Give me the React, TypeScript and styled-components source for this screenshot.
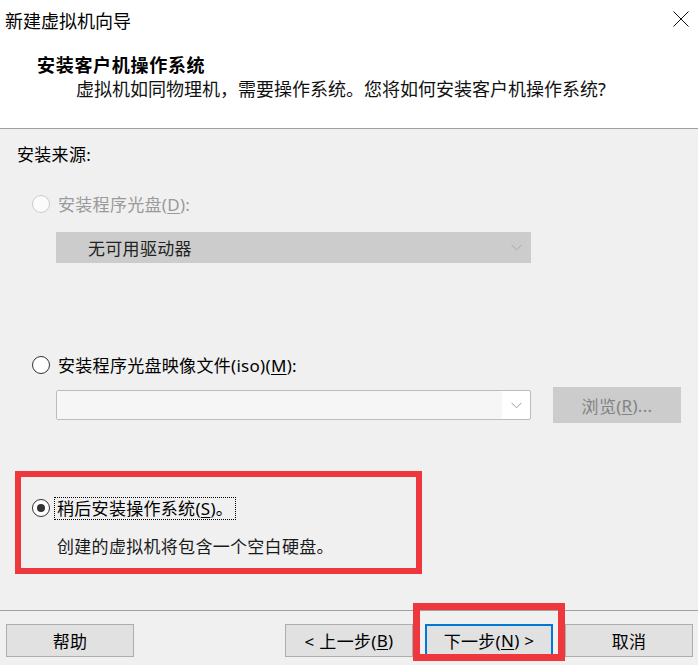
import React from 'react'
import styled, { createGlobalStyle } from 'styled-components'

const GlobalStyle = createGlobalStyle`
  html, body {
    margin: 0;
    padding: 0;
    background: #f0f0f0;
  }
  body {
    font-family: "Noto Sans", "Noto Sans CJK SC", sans-serif;
    color: #000;
  }
`

const Window = styled.div`
  width: 698px;
  height: 665px;
  display: flex;
  flex-direction: column;
  background: #f0f0f0;
  overflow: hidden;
`

const TitleBar = styled.div`
  height: 40px;
  flex: none;
  display: flex;
  align-items: center;
  justify-content: space-between;
  padding: 0 9px 0 5px;
  background: #fff;
  font-size: 18px;
`

const CloseButton = styled.div`
  width: 16px;
  height: 16px;
  display: flex;
  margin-top: -3px;
`

const Header = styled.div`
  flex: none;
  background: #fff;
  padding: 13px 0 27px 37px;
  border-bottom: 1px solid #a0a0a0;
`

const HeaderTitle = styled.div`
  font-size: 18px;
  line-height: 24px;
  font-weight: 700;
  letter-spacing: 0.7px;
`

const HeaderSub = styled.div`
  font-size: 18px;
  line-height: 24px;
  padding-left: 39px;
  color: #111;
`

const Body = styled.div`
  flex: 1;
  display: flex;
  flex-direction: column;
  padding: 0 17px;
`

const SectionLabel = styled.div`
  margin-top: 14px;
  font-size: 17px;
  line-height: 24px;
  letter-spacing: 0.3px;
`

const OptionRow = styled.div<{ $top: number; $inset?: number }>`
  display: flex;
  align-items: center;
  gap: 7px;
  height: 24px;
  margin-top: ${p => p.$top}px;
  padding-left: ${p => p.$inset ?? 15}px;
`

const Radio = styled.span<{ $checked?: boolean; $disabled?: boolean }>`
  width: 18px;
  height: 18px;
  box-sizing: border-box;
  border-radius: 50%;
  flex: none;
  border: 1px solid ${p => (p.$disabled ? '#cccccc' : '#333333')};
  background: ${p => (p.$disabled ? '#fbfbfb' : '#fff')};
  display: flex;
  align-items: center;
  justify-content: center;
  &::after {
    content: '';
    display: ${p => (p.$checked ? 'block' : 'none')};
    width: 8px;
    height: 8px;
    border-radius: 50%;
    background: #333;
  }
`

const OptionText = styled.span<{ $disabled?: boolean; $focused?: boolean }>`
  font-size: 17px;
  line-height: 21px;
  letter-spacing: 0.3px;
  color: ${p => (p.$disabled ? '#9a9a9a' : '#000')};
  margin-left: ${p => (p.$focused ? '-3px' : '0')};
  padding: 0 ${p => (p.$focused ? '2px' : '0')};
  border: 1px dotted ${p => (p.$focused ? '#000' : 'transparent')};
  u {
    text-decoration-thickness: 1px;
    text-underline-offset: 2px;
  }
`

const Combo = styled.div<{ $disabled?: boolean }>`
  display: flex;
  align-items: stretch;
  width: 475px;
  height: ${p => (p.$disabled ? 31 : 30)}px;
  box-sizing: border-box;
  border: 1px solid ${p => (p.$disabled ? '#cccccc' : '#bcbcbc')};
  background: ${p => (p.$disabled ? '#cccccc' : '#fff')};
  border-radius: ${p => (p.$disabled ? 0 : 2)}px;
`

const ComboField = styled.div<{ $disabled?: boolean }>`
  flex: 1;
  display: flex;
  align-items: center;
  padding-left: 31px;
  font-size: 17px;
  letter-spacing: 0.3px;
  color: #222;
  background: ${p => (p.$disabled ? 'transparent' : '#f6f6f6')};
`

const ComboArrow = styled.div`
  width: 28px;
  display: flex;
  align-items: center;
  justify-content: center;
`

const FirstCombo = styled.div`
  margin-top: 16px;
  padding-left: 39px;
`

const FileRow = styled.div`
  display: flex;
  align-items: center;
  gap: 22px;
  height: 36px;
  margin-top: 10px;
  padding-left: 39px;
`

const PushButton = styled.button<{ $disabled?: boolean; $default?: boolean; $w?: number; $h?: number }>`
  width: ${p => p.$w ?? 128}px;
  height: ${p => p.$h ?? 33}px;
  box-sizing: border-box;
  margin: 0;
  padding: 0;
  font-family: "Noto Sans", "Noto Sans CJK SC", sans-serif;
  font-size: 17px;
  letter-spacing: 0.3px;
  color: ${p => (p.$disabled ? '#838383' : '#000')};
  background: ${p => (p.$disabled ? '#cccccc' : '#e1e1e1')};
  border: ${p =>
    p.$default ? '2px solid #0078d7' : p.$disabled ? '1px solid #cccccc' : '1px solid #adadad'};
  display: flex;
  align-items: center;
  justify-content: center;
  u {
    text-decoration-thickness: 1px;
    text-underline-offset: 2px;
  }
`

const Highlight = styled.div`
  margin: 48px 0 0 -2px;
  width: 407px;
  height: 103px;
  box-sizing: border-box;
  border: 6px solid #ee383e;
  padding: 19px 0 0 11px;
`

const Description = styled.div`
  margin-top: 15px;
  padding-left: 25px;
  font-size: 17px;
  line-height: 24px;
  letter-spacing: 0.3px;
  color: #1a1a1a;
`

const Footer = styled.div`
  flex: none;
  height: 55px;
  box-sizing: border-box;
  border-top: 1px solid #a0a0a0;
  padding: 13px 5px 0 6px;
  display: flex;
  align-items: flex-start;
`

const NavGroup = styled.div`
  margin-left: auto;
  display: flex;
  gap: 12px;
`

const Marked = styled.span`
  position: relative;
  display: flex;
`

const MarkFrame = styled.span`
  position: absolute;
  left: -12px;
  right: -12px;
  top: -21px;
  bottom: -4px;
  border: 7px solid #ee383e;
  pointer-events: none;
`

const Chevron = ({ color }: { color: string }) => (
  <svg width="11" height="7" viewBox="0 0 11 7">
    <path d="M0.5 0.8 L5.5 5.8 L10.5 0.8" fill="none" stroke={color} strokeWidth="1" />
  </svg>
)

export default function App() {
  return (
    <>
      <GlobalStyle />
      <Window>
        <TitleBar>
          <span>新建虚拟机向导</span>
          <CloseButton>
            <svg width="16" height="16" viewBox="0 0 16 16">
              <path d="M0.5 0.5 L15.5 15.5 M15.5 0.5 L0.5 15.5" stroke="#111" strokeWidth="1" />
            </svg>
          </CloseButton>
        </TitleBar>

        <Header>
          <HeaderTitle>安装客户机操作系统</HeaderTitle>
          <HeaderSub>虚拟机如同物理机，需要操作系统。您将如何安装客户机操作系统?</HeaderSub>
        </Header>

        <Body>
          <SectionLabel>安装来源:</SectionLabel>

          <OptionRow $top={25}>
            <Radio $disabled />
            <OptionText $disabled>
              安装程序光盘(<u>D</u>):
            </OptionText>
          </OptionRow>
          <FirstCombo>
            <Combo $disabled>
              <ComboField $disabled>无可用驱动器</ComboField>
              <ComboArrow>
                <Chevron color="#a8a8a8" />
              </ComboArrow>
            </Combo>
          </FirstCombo>

          <OptionRow $top={90}>
            <Radio />
            <OptionText>
              安装程序光盘映像文件(iso)(<u>M</u>):
            </OptionText>
          </OptionRow>
          <FileRow>
            <Combo>
              <ComboField />
              <ComboArrow>
                <Chevron color="#9a9a9a" />
              </ComboArrow>
            </Combo>
            <PushButton $disabled $h={36}>
              浏览(<u>R</u>)...
            </PushButton>
          </FileRow>

          <Highlight>
            <OptionRow $top={0} $inset={0}>
              <Radio $checked />
              <OptionText $focused>
                稍后安装操作系统(<u>S</u>)。
              </OptionText>
            </OptionRow>
            <Description>创建的虚拟机将包含一个空白硬盘。</Description>
          </Highlight>
        </Body>

        <Footer>
          <PushButton>帮助</PushButton>
          <NavGroup>
            <PushButton>
              &lt; 上一步(<u>B</u>)
            </PushButton>
            <Marked>
              <PushButton $default>
                下一步(<u>N</u>) &gt;
              </PushButton>
              <MarkFrame />
            </Marked>
            <PushButton>取消</PushButton>
          </NavGroup>
        </Footer>
      </Window>
    </>
  )
}
